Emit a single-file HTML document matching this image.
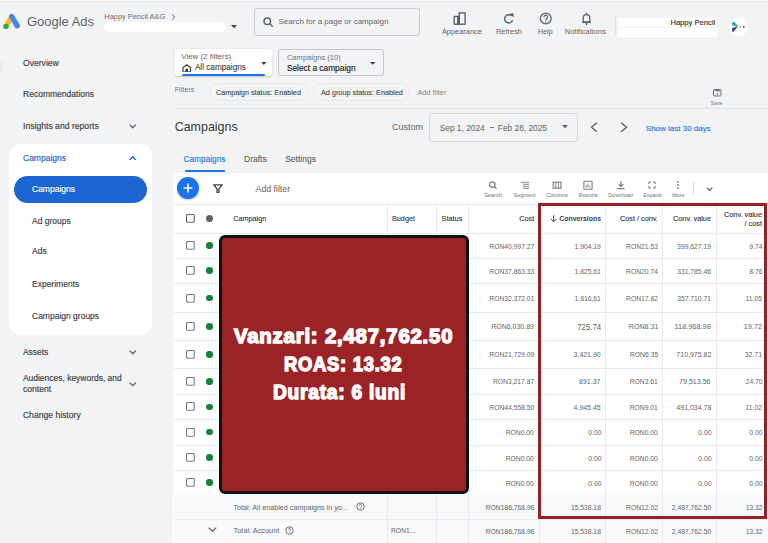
<!DOCTYPE html>
<html><head><meta charset="utf-8"><style>
html,body{margin:0;padding:0;}
body{width:768px;height:543px;overflow:hidden;position:relative;background:#f1f3f4;font-family:"Liberation Sans",sans-serif;}
.t{position:absolute;white-space:nowrap;}
.b{position:absolute;}
.ov{position:absolute;white-space:nowrap;color:#fff;font-weight:700;transform-origin:0 0;}

</style></head><body>
<div class="b" style="left:0.00px;top:0.00px;width:768.00px;height:1.20px;background:#fbfcfd"></div>
<div class="b" style="left:0.00px;top:1.20px;width:768.00px;height:1.00px;background:#e9ebee"></div>
<div class="b" style="left:0.00px;top:60.00px;width:3.00px;height:13.00px;background:#ebedef"></div>
<svg class="b" style="left:2.00px;top:12.00px" width="20" height="19" viewBox="0 0 20 19"><line x1="4.1" y1="14.3" x2="9.4" y2="5.0" stroke="#fbbc04" stroke-width="4.8" stroke-linecap="round"/><line x1="9.7" y1="4.6" x2="15.2" y2="13.8" stroke="#4285f4" stroke-width="5.3" stroke-linecap="round"/><circle cx="4.0" cy="14.4" r="2.7" fill="#34a853"/></svg>
<div class="t" style="left:27.00px;top:15.63px;font-size:12.96px;line-height:12.96px;color:#5f6368;font-weight:400;">Google Ads</div>
<div class="t" style="left:104.30px;top:13.02px;font-size:7.42px;line-height:7.42px;color:#6c7075;font-weight:400;">Happy Pencil A&amp;G</div>
<svg class="b" style="left:170.50px;top:13.80px" width="5" height="6" viewBox="0 0 5 6"><path d="M1.1 0.5 L3.7 3 L1.1 5.5" fill="none" stroke="#5f6368" stroke-width="1"/></svg>
<div class="b" style="left:104.00px;top:21.90px;width:122.00px;height:10.40px;background:#fff;border-radius:5px"></div>
<svg class="b" style="left:230.50px;top:25.00px" width="6" height="3.5" viewBox="0 0 6 3.5"><path d="M0 0 L6 0 L3 3.2 Z" fill="#3c4043"/></svg>
<div class="b" style="left:254.30px;top:8.30px;width:165.40px;height:27.30px;border:1px solid #c8cbcf;border-radius:3px;box-sizing:border-box"></div>
<svg class="b" style="left:262.50px;top:16.50px" width="11" height="11" viewBox="0 0 11 11"><circle cx="4.3" cy="4.3" r="3.3" fill="none" stroke="#5f6368" stroke-width="1.5"/><line x1="6.7" y1="6.7" x2="9.8" y2="9.8" stroke="#5f6368" stroke-width="1.6"/></svg>
<div class="t" style="left:278.50px;top:18.22px;font-size:8.01px;line-height:8.01px;color:#63676c;font-weight:400;">Search for a page or campaign</div>
<svg class="b" style="left:452.50px;top:12.00px" width="13" height="13" viewBox="0 0 13 13"><rect x="6.2" y="0.9" width="5.9" height="11.3" fill="none" stroke="#5f6368" stroke-width="1.4"/><rect x="1.2" y="4.5" width="5" height="7.7" fill="none" stroke="#5f6368" stroke-width="1.4"/><rect x="4" y="4.5" width="2.6" height="7.7" fill="#5f6368"/></svg>
<div class="t" style="left:261.90px;width:400px;text-align:center;top:28.32px;font-size:7.42px;line-height:7.42px;color:#5f6368;font-weight:400;">Appearance</div>
<svg class="b" style="left:502.50px;top:12.50px" width="12" height="12" viewBox="0 0 12 12"><path d="M9.6 7.2 A4.1 4.1 0 1 1 8.6 2.9" fill="none" stroke="#5f6368" stroke-width="1.4"/><path d="M6.6 0.6 L10.6 0.6 L10.6 4.6 Z" fill="#5f6368"/></svg>
<div class="t" style="left:309.00px;width:400px;text-align:center;top:28.31px;font-size:7.43px;line-height:7.43px;color:#5f6368;font-weight:400;">Refresh</div>
<svg class="b" style="left:539.00px;top:12.00px" width="13.5" height="13.5" viewBox="0 0 13.5 13.5"><circle cx="6.75" cy="6.5" r="5.4" fill="none" stroke="#5f6368" stroke-width="1.3"/><path d="M4.9 5.2 A1.9 1.9 0 1 1 7.6 6.7 C6.9 7.1 6.75 7.5 6.75 8.3" fill="none" stroke="#5f6368" stroke-width="1.2"/><circle cx="6.75" cy="10" r="0.75" fill="#5f6368"/></svg>
<div class="t" style="left:345.20px;width:400px;text-align:center;top:28.43px;font-size:7.29px;line-height:7.29px;color:#5f6368;font-weight:400;">Help</div>
<svg class="b" style="left:581.00px;top:12.00px" width="11" height="13.5" viewBox="0 0 11 13.5"><path d="M2.2 10 L2.2 6 A3.3 3.3 0 0 1 8.8 6 L8.8 10 Z" fill="none" stroke="#5f6368" stroke-width="1.3" stroke-linejoin="round"/><line x1="1" y1="10.4" x2="10" y2="10.4" stroke="#5f6368" stroke-width="1.3"/><line x1="5.5" y1="0.6" x2="5.5" y2="2.6" stroke="#5f6368" stroke-width="1.3"/><circle cx="5.5" cy="12.1" r="1" fill="#5f6368"/></svg>
<div class="t" style="left:385.20px;width:400px;text-align:center;top:28.22px;font-size:7.53px;line-height:7.53px;color:#5f6368;font-weight:400;">Notifications</div>
<div class="b" style="left:614.80px;top:16.00px;width:0.80px;height:20.00px;background:#e3e5e8"></div>
<div class="b" style="left:618.40px;top:17.90px;width:98.00px;height:9.20px;background:#fff"></div>
<div class="b" style="left:618.40px;top:28.30px;width:99.00px;height:8.40px;background:#fff"></div>
<div class="t" style="right:52.70px;text-align:right;top:18.63px;font-size:7.64px;line-height:7.64px;color:#303336;font-weight:400;background:#fff;-webkit-text-stroke:0.15px #303336">Happy Pencil</div>
<div class="b" style="left:728.80px;top:17.90px;width:18.80px;height:18.40px;background:#fff;border-radius:50%"></div>
<svg class="b" style="left:731.00px;top:20.00px" width="16" height="14" viewBox="0 0 16 14"><path d="M1.1 1.8 L3.4 2.1 L7 5.9 L6.2 6.9 L1.1 5.0 Z" fill="#2aa5c0"/><path d="M1.1 7.9 L6.6 6.7 L2.6 11.8 L1.3 11.8 Z" fill="#2b3f82"/><circle cx="9.4" cy="6.9" r="0.7" fill="#4a5866"/><rect x="12" y="5.9" width="1.6" height="1.8" fill="#4a5866"/></svg>
<div class="t" style="left:23.00px;top:58.52px;font-size:8.60px;line-height:8.60px;color:#3c4043;font-weight:400;-webkit-text-stroke:0.15px #3c4043">Overview</div>
<div class="t" style="left:23.00px;top:90.29px;font-size:8.52px;line-height:8.52px;color:#3c4043;font-weight:400;-webkit-text-stroke:0.15px #3c4043">Recommendations</div>
<div class="t" style="left:23.00px;top:121.68px;font-size:8.65px;line-height:8.65px;color:#3c4043;font-weight:400;-webkit-text-stroke:0.15px #3c4043">Insights and reports</div>
<svg class="b" style="left:129.20px;top:124.30px" width="7.5" height="4.5" viewBox="0 0 7.5 4.5"><path d="M0.7 0.6 L3.75 3.8 L6.8 0.6" fill="none" stroke="#5f6368" stroke-width="1.3"/></svg>
<div class="b" style="left:9.20px;top:144.00px;width:142.40px;height:190.50px;background:#fff;border-radius:12px"></div>
<div class="t" style="left:23.00px;top:153.80px;font-size:8.50px;line-height:8.50px;color:#1a62d2;font-weight:400;-webkit-text-stroke:0.15px #1a62d2">Campaigns</div>
<svg class="b" style="left:129.00px;top:155.60px" width="7.5" height="4.5" viewBox="0 0 7.5 4.5"><path d="M0.7 3.9 L3.75 0.7 L6.8 3.9" fill="none" stroke="#1a62d2" stroke-width="1.3"/></svg>
<div class="b" style="left:13.80px;top:175.80px;width:133.50px;height:27.30px;background:#1b66d2;border-radius:14px"></div>
<div class="t" style="left:32.00px;top:185.30px;font-size:8.50px;line-height:8.50px;color:#fff;font-weight:400;-webkit-text-stroke:0.15px #fff">Campaigns</div>
<div class="t" style="left:32.00px;top:216.80px;font-size:8.50px;line-height:8.50px;color:#3c4043;font-weight:400;-webkit-text-stroke:0.15px #3c4043">Ad groups</div>
<div class="t" style="left:32.00px;top:247.40px;font-size:8.50px;line-height:8.50px;color:#3c4043;font-weight:400;-webkit-text-stroke:0.15px #3c4043">Ads</div>
<div class="t" style="left:32.00px;top:279.50px;font-size:8.50px;line-height:8.50px;color:#3c4043;font-weight:400;-webkit-text-stroke:0.15px #3c4043">Experiments</div>
<div class="t" style="left:32.00px;top:311.80px;font-size:8.50px;line-height:8.50px;color:#3c4043;font-weight:400;-webkit-text-stroke:0.15px #3c4043">Campaign groups</div>
<div class="t" style="left:22.90px;top:347.84px;font-size:8.46px;line-height:8.46px;color:#3c4043;font-weight:400;-webkit-text-stroke:0.15px #3c4043">Assets</div>
<svg class="b" style="left:129.20px;top:350.20px" width="7.5" height="4.5" viewBox="0 0 7.5 4.5"><path d="M0.7 0.6 L3.75 3.8 L6.8 0.6" fill="none" stroke="#5f6368" stroke-width="1.3"/></svg>
<div class="t" style="left:22.90px;top:373.82px;font-size:8.48px;line-height:8.48px;color:#3c4043;font-weight:400;-webkit-text-stroke:0.15px #3c4043">Audiences, keywords, and</div>
<div class="t" style="left:22.90px;top:384.82px;font-size:8.60px;line-height:8.60px;color:#3c4043;font-weight:400;-webkit-text-stroke:0.15px #3c4043">content</div>
<svg class="b" style="left:129.20px;top:381.80px" width="7.5" height="4.5" viewBox="0 0 7.5 4.5"><path d="M0.7 0.6 L3.75 3.8 L6.8 0.6" fill="none" stroke="#5f6368" stroke-width="1.3"/></svg>
<div class="t" style="left:22.90px;top:410.62px;font-size:8.60px;line-height:8.60px;color:#3c4043;font-weight:400;-webkit-text-stroke:0.15px #3c4043">Change history</div>
<div class="b" style="left:174.60px;top:49.00px;width:97.40px;height:27.00px;background:#fff;box-shadow:0 0.5px 1.5px rgba(0,0,0,0.18);border-radius:2px"></div>
<div class="b" style="left:182.00px;top:74.00px;width:83.00px;height:2.20px;background:#1a73e8;border-radius:1px"></div>
<div class="t" style="left:181.30px;top:53.29px;font-size:7.92px;line-height:7.92px;color:#5f6368;font-weight:400;">View (2 filters)</div>
<svg class="b" style="left:182.30px;top:63.60px" width="9.5" height="8.5" viewBox="0 0 9.5 8.5"><path d="M1 8 L1 3.6 L4.75 0.8 L8.5 3.6 L8.5 8 Z" fill="none" stroke="#3c4043" stroke-width="1.2" stroke-linejoin="round"/><rect x="3.4" y="4.8" width="2.7" height="3.2" fill="#3c4043"/></svg>
<div class="t" style="left:194.90px;top:63.96px;font-size:8.20px;line-height:8.20px;color:#3c4043;font-weight:400;-webkit-text-stroke:0.1px #3c4043">All campaigns</div>
<svg class="b" style="left:261.00px;top:61.90px" width="5.6" height="3.2" viewBox="0 0 6 3.5"><path d="M0 0 L6 0 L3 3.2 Z" fill="#3c4043"/></svg>
<div class="b" style="left:277.50px;top:49.00px;width:106.30px;height:27.00px;border:1px solid #c5c8cc;border-radius:3px;box-sizing:border-box"></div>
<div class="t" style="left:286.90px;top:53.97px;font-size:7.59px;line-height:7.59px;color:#70757a;font-weight:400;">Campaigns (10)</div>
<div class="t" style="left:286.90px;top:63.73px;font-size:8.35px;line-height:8.35px;color:#202124;font-weight:400;-webkit-text-stroke:0.15px #202124">Select a campaign</div>
<svg class="b" style="left:369.80px;top:61.80px" width="5.2" height="3" viewBox="0 0 5.2 3"><path d="M0 0 L5.2 0 L2.6 2.8 Z" fill="#3c4043"/></svg>
<div class="t" style="left:174.70px;top:85.80px;font-size:7.20px;line-height:7.20px;color:#70757a;font-weight:400;">Filters</div>
<div class="b" style="left:208.60px;top:83.00px;width:100.00px;height:17.80px;border:1px solid #e6e8eb;border-radius:9px;box-sizing:border-box"></div>
<div class="t" style="left:215.90px;top:89.06px;font-size:7.25px;line-height:7.25px;color:#484c50;font-weight:400;-webkit-text-stroke:0.12px #484c50">Campaign status: Enabled</div>
<div class="b" style="left:313.20px;top:83.00px;width:97.30px;height:17.80px;border:1px solid #e6e8eb;border-radius:9px;box-sizing:border-box"></div>
<div class="t" style="left:320.90px;top:89.02px;font-size:7.30px;line-height:7.30px;color:#484c50;font-weight:400;-webkit-text-stroke:0.12px #484c50">Ad group status: Enabled</div>
<div class="t" style="left:417.40px;top:88.78px;font-size:7.35px;line-height:7.35px;color:#80868b;font-weight:400;">Add filter</div>
<svg class="b" style="left:712.60px;top:89.00px" width="9" height="7.5" viewBox="0 0 9 7.5"><rect x="0.55" y="0.55" width="7.4" height="6.4" rx="0.5" fill="none" stroke="#6f7378" stroke-width="1.0"/><rect x="2.2" y="0.6" width="4.6" height="1.7" fill="#6f7378"/><circle cx="4.5" cy="4.7" r="0.8" fill="#6f7378"/></svg>
<div class="t" style="left:516.60px;width:400px;text-align:center;top:100.92px;font-size:5.05px;line-height:5.05px;color:#70757a;font-weight:400;">Save</div>
<div class="b" style="left:174.00px;top:107.60px;width:594.00px;height:1.00px;background:#e2e4e7"></div>
<div class="t" style="left:174.70px;top:120.65px;font-size:12.46px;line-height:12.46px;color:#35383b;font-weight:400;">Campaigns</div>
<div class="t" style="left:391.90px;top:123.38px;font-size:9.00px;line-height:9.00px;color:#5f6368;font-weight:400;">Custom</div>
<div class="b" style="left:428.50px;top:112.70px;width:149.20px;height:29.60px;border:1px solid #d6d9dc;border-radius:3px;box-sizing:border-box"></div>
<div class="t" style="left:439.70px;top:124.33px;font-size:8.35px;line-height:8.35px;color:#5f6368;font-weight:400;">Sep 1, 2024</div>
<div class="b" style="left:490.20px;top:127.20px;width:3.60px;height:0.80px;background:#6f7378"></div>
<div class="t" style="left:497.80px;top:124.33px;font-size:8.35px;line-height:8.35px;color:#5f6368;font-weight:400;">Feb 28, 2025</div>
<svg class="b" style="left:562.30px;top:125.00px" width="6" height="3.6" viewBox="0 0 6 3.6"><path d="M0 0 L6 0 L3 3.3 Z" fill="#5f6368"/></svg>
<svg class="b" style="left:589.50px;top:122.00px" width="8" height="10.5" viewBox="0 0 8 10.5"><path d="M6.8 0.7 L1.5 5.25 L6.8 9.8" fill="none" stroke="#5f6368" stroke-width="1.4"/></svg>
<svg class="b" style="left:619.60px;top:122.00px" width="8" height="10.5" viewBox="0 0 8 10.5"><path d="M1.2 0.7 L6.5 5.25 L1.2 9.8" fill="none" stroke="#5f6368" stroke-width="1.4"/></svg>
<div class="t" style="left:645.80px;top:124.92px;font-size:8.01px;line-height:8.01px;color:#1a73e8;font-weight:400;-webkit-text-stroke:0.12px #1a73e8">Show last 30 days</div>
<div class="t" style="left:183.50px;top:154.67px;font-size:8.30px;line-height:8.30px;color:#1a73e8;font-weight:400;-webkit-text-stroke:0.12px #1a73e8">Campaigns</div>
<div class="b" style="left:184.60px;top:170.00px;width:40.00px;height:2.00px;background:#1a73e8;border-radius:1px 1px 0 0"></div>
<div class="t" style="left:244.00px;top:154.50px;font-size:8.50px;line-height:8.50px;color:#5f6368;font-weight:400;-webkit-text-stroke:0.12px #5f6368">Drafts</div>
<div class="t" style="left:285.20px;top:154.50px;font-size:8.50px;line-height:8.50px;color:#5f6368;font-weight:400;-webkit-text-stroke:0.12px #5f6368">Settings</div>
<div class="b" style="left:173.30px;top:172.50px;width:594.70px;height:371.00px;background:#fff"></div>
<div class="b" style="left:176.50px;top:176.50px;width:22.50px;height:22.50px;background:#1a73e8;border-radius:50%;box-shadow:0 1px 2px rgba(0,0,0,0.25)"></div>
<svg class="b" style="left:181.75px;top:181.75px" width="12" height="12" viewBox="0 0 12 12"><path d="M6 1.6 V10.4 M1.6 6 H10.4" stroke="#fff" stroke-width="1.6"/></svg>
<svg class="b" style="left:212.50px;top:183.50px" width="10" height="9.5" viewBox="0 0 10 9.5"><path d="M0.8 0.8 H9.2 L5.9 4.8 V8.8 L4.1 8.8 V4.8 Z" fill="none" stroke="#3c4043" stroke-width="1.3" stroke-linejoin="round"/></svg>
<div class="t" style="left:255.60px;top:185.10px;font-size:8.74px;line-height:8.74px;color:#5f6368;font-weight:400;">Add filter</div>
<svg class="b" style="left:487.00px;top:180.00px" width="12" height="10" viewBox="0 0 12 10"><circle cx="5.3" cy="4.6" r="2.7" fill="none" stroke="#74787d" stroke-width="1.2"/><line x1="7.2" y1="6.5" x2="9.6" y2="8.9" stroke="#74787d" stroke-width="1.3"/></svg>
<div class="t" style="left:293.00px;width:400px;text-align:center;top:192.86px;font-size:5.60px;line-height:5.60px;color:#6f7378;font-weight:400;">Search</div>
<svg class="b" style="left:518.60px;top:180.00px" width="12" height="10" viewBox="0 0 12 10"><path d="M1.8 2.3 H10.2 M4 4.3 H10.2 M4 6.3 H10.2 M4 8.3 H10.2" stroke="#74787d" stroke-width="0.9"/></svg>
<div class="t" style="left:324.60px;width:400px;text-align:center;top:192.94px;font-size:5.50px;line-height:5.50px;color:#6f7378;font-weight:400;">Segment</div>
<svg class="b" style="left:551.00px;top:180.00px" width="12" height="10" viewBox="0 0 12 10"><rect x="2.2" y="2.2" width="7.8" height="6" fill="none" stroke="#74787d" stroke-width="1.1"/><path d="M4.8 2.2 V8.2 M7.4 2.2 V8.2" stroke="#74787d" stroke-width="0.9"/></svg>
<div class="t" style="left:357.00px;width:400px;text-align:center;top:192.94px;font-size:5.50px;line-height:5.50px;color:#6f7378;font-weight:400;">Columns</div>
<svg class="b" style="left:582.20px;top:180.00px" width="12" height="10" viewBox="0 0 12 10"><rect x="1.9" y="1.2" width="8.2" height="8" rx="0.8" fill="none" stroke="#74787d" stroke-width="1.1"/><path d="M4.2 7.5 V5 M6 7.5 V3.5 M7.8 7.5 V6" stroke="#74787d" stroke-width="0.9"/></svg>
<div class="t" style="left:388.20px;width:400px;text-align:center;top:192.94px;font-size:5.50px;line-height:5.50px;color:#6f7378;font-weight:400;">Reports</div>
<svg class="b" style="left:614.60px;top:180.00px" width="12" height="10" viewBox="0 0 12 10"><path d="M6 1 V6.3 M3.6 4.2 L6 6.5 L8.4 4.2 M2.4 8.6 H9.6" fill="none" stroke="#74787d" stroke-width="1.1"/></svg>
<div class="t" style="left:420.60px;width:400px;text-align:center;top:192.94px;font-size:5.50px;line-height:5.50px;color:#6f7378;font-weight:400;">Download</div>
<svg class="b" style="left:646.30px;top:180.00px" width="12" height="10" viewBox="0 0 12 10"><path d="M3 4 V2 H5 M7 2 H9 V4 M9 6 V8 H7 M5 8 H3 V6" fill="none" stroke="#74787d" stroke-width="1.1"/></svg>
<div class="t" style="left:452.30px;width:400px;text-align:center;top:193.03px;font-size:5.40px;line-height:5.40px;color:#6f7378;font-weight:400;">Expand</div>
<svg class="b" style="left:672.40px;top:180.00px" width="12" height="10" viewBox="0 0 12 10"><circle cx="6" cy="1.8" r="0.9" fill="#74787d"/><circle cx="6" cy="5" r="0.9" fill="#74787d"/><circle cx="6" cy="8.2" r="0.9" fill="#74787d"/></svg>
<div class="t" style="left:478.40px;width:400px;text-align:center;top:192.94px;font-size:5.50px;line-height:5.50px;color:#6f7378;font-weight:400;">More</div>
<div class="b" style="left:693.40px;top:181.80px;width:0.80px;height:13.20px;background:#dadce0"></div>
<svg class="b" style="left:705.50px;top:186.80px" width="7" height="4" viewBox="0 0 7 4"><path d="M0.7 0.6 L3.5 3.3 L6.3 0.6" fill="none" stroke="#5f6368" stroke-width="1.2"/></svg>
<div class="b" style="left:174.00px;top:204.00px;width:594.00px;height:0.90px;background:#e8eaed"></div>
<div class="b" style="left:174.00px;top:232.55px;width:594.00px;height:0.90px;background:#e8eaed"></div>
<div class="b" style="left:174.00px;top:257.75px;width:594.00px;height:0.90px;background:#e8eaed"></div>
<div class="b" style="left:174.00px;top:282.75px;width:594.00px;height:0.90px;background:#e8eaed"></div>
<div class="b" style="left:174.00px;top:312.15px;width:594.00px;height:0.90px;background:#e8eaed"></div>
<div class="b" style="left:174.00px;top:339.85px;width:594.00px;height:0.90px;background:#e8eaed"></div>
<div class="b" style="left:174.00px;top:367.95px;width:594.00px;height:0.90px;background:#e8eaed"></div>
<div class="b" style="left:174.00px;top:394.05px;width:594.00px;height:0.90px;background:#e8eaed"></div>
<div class="b" style="left:174.00px;top:418.75px;width:594.00px;height:0.90px;background:#e8eaed"></div>
<div class="b" style="left:174.00px;top:444.55px;width:594.00px;height:0.90px;background:#e8eaed"></div>
<div class="b" style="left:174.00px;top:469.85px;width:594.00px;height:0.90px;background:#e8eaed"></div>
<div class="b" style="left:174.00px;top:494.55px;width:594.00px;height:0.90px;background:#e8eaed"></div>
<div class="b" style="left:174.00px;top:519.15px;width:594.00px;height:0.90px;background:#e8eaed"></div>
<div class="b" style="left:174.00px;top:495.40px;width:594.00px;height:24.00px;background:#f8f9fa"></div>
<div class="b" style="left:174.00px;top:520.00px;width:594.00px;height:23.00px;background:#f8f9fa"></div>
<div class="b" style="left:387.05px;top:204.00px;width:0.90px;height:339.00px;background:#e8eaed"></div>
<div class="b" style="left:436.15px;top:204.00px;width:0.90px;height:339.00px;background:#e8eaed"></div>
<div class="b" style="left:467.95px;top:204.00px;width:0.90px;height:339.00px;background:#e8eaed"></div>
<div class="b" style="left:539.05px;top:204.00px;width:0.90px;height:339.00px;background:#e8eaed"></div>
<div class="b" style="left:605.15px;top:204.00px;width:0.90px;height:339.00px;background:#e8eaed"></div>
<div class="b" style="left:662.15px;top:204.00px;width:0.90px;height:339.00px;background:#e8eaed"></div>
<div class="b" style="left:715.75px;top:204.00px;width:0.90px;height:339.00px;background:#e8eaed"></div>
<svg class="b" style="left:185.80px;top:214.30px" width="9" height="9" viewBox="0 0 9 9"><rect x="0.55" y="0.55" width="7.7" height="7.7" rx="0.8" fill="none" stroke="#5f6368" stroke-width="1.1"/></svg>
<div class="b" style="left:206.00px;top:215.00px;width:7.00px;height:7.00px;background:#5f6368;border-radius:50%"></div>
<div class="t" style="left:233.30px;top:215.37px;font-size:7.24px;line-height:7.24px;color:#3c4043;font-weight:400;-webkit-text-stroke:0.15px #3c4043">Campaign</div>
<div class="t" style="left:392.00px;top:215.15px;font-size:7.26px;line-height:7.26px;color:#3c4043;font-weight:400;-webkit-text-stroke:0.15px #3c4043">Budget</div>
<div class="t" style="left:441.60px;top:215.12px;font-size:7.30px;line-height:7.30px;color:#3c4043;font-weight:400;-webkit-text-stroke:0.15px #3c4043">Status</div>
<div class="t" style="right:233.80px;text-align:right;top:214.92px;font-size:7.30px;line-height:7.30px;color:#3c4043;font-weight:400;-webkit-text-stroke:0.15px #3c4043">Cost</div>
<svg class="b" style="left:549.80px;top:215.00px" width="7.4" height="7.5" viewBox="0 0 7.4 7.5"><path d="M3.7 0.3 V6.8 M0.8 3.9 L3.7 6.8 L6.6 3.9" fill="none" stroke="#3c4043" stroke-width="1"/></svg>
<div class="t" style="right:167.00px;text-align:right;top:216.16px;font-size:6.90px;line-height:6.90px;color:#3c4043;font-weight:700;">Conversions</div>
<div class="t" style="right:110.00px;text-align:right;top:214.92px;font-size:7.30px;line-height:7.30px;color:#3c4043;font-weight:400;-webkit-text-stroke:0.15px #3c4043">Cost / conv.</div>
<div class="t" style="right:57.00px;text-align:right;top:214.92px;font-size:7.30px;line-height:7.30px;color:#3c4043;font-weight:400;-webkit-text-stroke:0.15px #3c4043">Conv. value</div>
<div class="t" style="right:6.00px;text-align:right;top:210.82px;font-size:7.30px;line-height:7.30px;color:#3c4043;font-weight:400;-webkit-text-stroke:0.15px #3c4043">Conv. value</div>
<div class="t" style="right:6.00px;text-align:right;top:220.02px;font-size:7.30px;line-height:7.30px;color:#3c4043;font-weight:400;-webkit-text-stroke:0.15px #3c4043">/ cost</div>
<div class="t" style="right:234.00px;text-align:right;top:242.63px;font-size:7.40px;line-height:7.40px;color:#5f6368;font-weight:400;transform:scaleX(0.912);transform-origin:100% 0;">RON40,997.27</div>
<div class="t" style="right:167.00px;text-align:right;top:242.63px;font-size:7.40px;line-height:7.40px;color:#5f6368;font-weight:400;transform:scaleX(0.912);transform-origin:100% 0;">1,904.19</div>
<div class="t" style="right:110.00px;text-align:right;top:242.63px;font-size:7.40px;line-height:7.40px;color:#5f6368;font-weight:400;transform:scaleX(0.912);transform-origin:100% 0;">RON21.53</div>
<div class="t" style="right:57.00px;text-align:right;top:242.63px;font-size:7.40px;line-height:7.40px;color:#5f6368;font-weight:400;transform:scaleX(0.912);transform-origin:100% 0;">399,627.19</div>
<div class="t" style="right:6.00px;text-align:right;top:242.63px;font-size:7.40px;line-height:7.40px;color:#5f6368;font-weight:400;transform:scaleX(0.912);transform-origin:100% 0;">9.74</div>
<svg class="b" style="left:185.80px;top:241.20px" width="9" height="9" viewBox="0 0 9 9"><rect x="0.55" y="0.55" width="7.7" height="7.7" rx="0.8" fill="none" stroke="#777b80" stroke-width="1.1"/></svg>
<div class="b" style="left:206.30px;top:242.30px;width:6.60px;height:6.60px;background:#188038;border-radius:50%"></div>
<div class="t" style="right:234.00px;text-align:right;top:267.73px;font-size:7.40px;line-height:7.40px;color:#5f6368;font-weight:400;transform:scaleX(0.912);transform-origin:100% 0;">RON37,863.33</div>
<div class="t" style="right:167.00px;text-align:right;top:267.73px;font-size:7.40px;line-height:7.40px;color:#5f6368;font-weight:400;transform:scaleX(0.912);transform-origin:100% 0;">1,825.61</div>
<div class="t" style="right:110.00px;text-align:right;top:267.73px;font-size:7.40px;line-height:7.40px;color:#5f6368;font-weight:400;transform:scaleX(0.912);transform-origin:100% 0;">RON20.74</div>
<div class="t" style="right:57.00px;text-align:right;top:267.73px;font-size:7.40px;line-height:7.40px;color:#5f6368;font-weight:400;transform:scaleX(0.912);transform-origin:100% 0;">331,785.46</div>
<div class="t" style="right:6.00px;text-align:right;top:267.73px;font-size:7.40px;line-height:7.40px;color:#5f6368;font-weight:400;transform:scaleX(0.912);transform-origin:100% 0;">8.76</div>
<svg class="b" style="left:185.80px;top:266.30px" width="9" height="9" viewBox="0 0 9 9"><rect x="0.55" y="0.55" width="7.7" height="7.7" rx="0.8" fill="none" stroke="#777b80" stroke-width="1.1"/></svg>
<div class="b" style="left:206.30px;top:267.40px;width:6.60px;height:6.60px;background:#188038;border-radius:50%"></div>
<div class="t" style="right:234.00px;text-align:right;top:294.93px;font-size:7.40px;line-height:7.40px;color:#5f6368;font-weight:400;transform:scaleX(0.912);transform-origin:100% 0;">RON32,372.01</div>
<div class="t" style="right:167.00px;text-align:right;top:294.93px;font-size:7.40px;line-height:7.40px;color:#5f6368;font-weight:400;transform:scaleX(0.912);transform-origin:100% 0;">1,816,61</div>
<div class="t" style="right:110.00px;text-align:right;top:294.93px;font-size:7.40px;line-height:7.40px;color:#5f6368;font-weight:400;transform:scaleX(0.912);transform-origin:100% 0;">RON17.82</div>
<div class="t" style="right:57.00px;text-align:right;top:294.93px;font-size:7.40px;line-height:7.40px;color:#5f6368;font-weight:400;transform:scaleX(0.912);transform-origin:100% 0;">357,710.71</div>
<div class="t" style="right:6.00px;text-align:right;top:294.93px;font-size:7.40px;line-height:7.40px;color:#5f6368;font-weight:400;transform:scaleX(0.912);transform-origin:100% 0;">11.05</div>
<svg class="b" style="left:185.80px;top:293.50px" width="9" height="9" viewBox="0 0 9 9"><rect x="0.55" y="0.55" width="7.7" height="7.7" rx="0.8" fill="none" stroke="#777b80" stroke-width="1.1"/></svg>
<div class="b" style="left:206.30px;top:294.60px;width:6.60px;height:6.60px;background:#188038;border-radius:50%"></div>
<div class="t" style="right:234.00px;text-align:right;top:323.23px;font-size:7.70px;line-height:7.70px;color:#5f6368;font-weight:400;transform:scaleX(0.912);transform-origin:100% 0;">RON6,030.89</div>
<div class="t" style="right:167.00px;text-align:right;top:322.54px;font-size:8.51px;line-height:8.51px;color:#5f6368;font-weight:400;transform:scaleX(0.912);transform-origin:100% 0;">725.74</div>
<div class="t" style="right:110.00px;text-align:right;top:323.17px;font-size:7.77px;line-height:7.77px;color:#5f6368;font-weight:400;transform:scaleX(0.912);transform-origin:100% 0;">RON8.31</div>
<div class="t" style="right:57.00px;text-align:right;top:322.92px;font-size:8.07px;line-height:8.07px;color:#5f6368;font-weight:400;transform:scaleX(0.912);transform-origin:100% 0;">118,968.98</div>
<div class="t" style="right:6.00px;text-align:right;top:322.98px;font-size:7.99px;line-height:7.99px;color:#5f6368;font-weight:400;transform:scaleX(0.912);transform-origin:100% 0;">19.72</div>
<svg class="b" style="left:185.80px;top:322.05px" width="9" height="9" viewBox="0 0 9 9"><rect x="0.55" y="0.55" width="7.7" height="7.7" rx="0.8" fill="none" stroke="#777b80" stroke-width="1.1"/></svg>
<div class="b" style="left:206.30px;top:323.15px;width:6.60px;height:6.60px;background:#188038;border-radius:50%"></div>
<div class="t" style="right:234.00px;text-align:right;top:351.38px;font-size:7.40px;line-height:7.40px;color:#5f6368;font-weight:400;transform:scaleX(0.912);transform-origin:100% 0;">RON21,729.09</div>
<div class="t" style="right:167.00px;text-align:right;top:351.21px;font-size:7.61px;line-height:7.61px;color:#5f6368;font-weight:400;transform:scaleX(0.912);transform-origin:100% 0;">3,421.90</div>
<div class="t" style="right:110.00px;text-align:right;top:351.30px;font-size:7.50px;line-height:7.50px;color:#5f6368;font-weight:400;transform:scaleX(0.912);transform-origin:100% 0;">RON6.35</div>
<div class="t" style="right:57.00px;text-align:right;top:351.16px;font-size:7.67px;line-height:7.67px;color:#5f6368;font-weight:400;transform:scaleX(0.912);transform-origin:100% 0;">710,975.82</div>
<div class="t" style="right:6.00px;text-align:right;top:351.20px;font-size:7.62px;line-height:7.62px;color:#5f6368;font-weight:400;transform:scaleX(0.912);transform-origin:100% 0;">32.71</div>
<svg class="b" style="left:185.80px;top:349.95px" width="9" height="9" viewBox="0 0 9 9"><rect x="0.55" y="0.55" width="7.7" height="7.7" rx="0.8" fill="none" stroke="#777b80" stroke-width="1.1"/></svg>
<div class="b" style="left:206.30px;top:351.05px;width:6.60px;height:6.60px;background:#188038;border-radius:50%"></div>
<div class="t" style="right:234.00px;text-align:right;top:378.48px;font-size:7.40px;line-height:7.40px;color:#5f6368;font-weight:400;transform:scaleX(0.912);transform-origin:100% 0;">RON3,217.87</div>
<div class="t" style="right:167.00px;text-align:right;top:378.23px;font-size:7.70px;line-height:7.70px;color:#5f6368;font-weight:400;transform:scaleX(0.912);transform-origin:100% 0;">891.37</div>
<div class="t" style="right:110.00px;text-align:right;top:378.48px;font-size:7.40px;line-height:7.40px;color:#5f6368;font-weight:400;transform:scaleX(0.912);transform-origin:100% 0;">RON3.61</div>
<div class="t" style="right:57.00px;text-align:right;top:378.17px;font-size:7.77px;line-height:7.77px;color:#5f6368;font-weight:400;transform:scaleX(0.912);transform-origin:100% 0;">79,513.56</div>
<div class="t" style="right:6.00px;text-align:right;top:378.48px;font-size:7.40px;line-height:7.40px;color:#5f6368;font-weight:400;transform:scaleX(0.912);transform-origin:100% 0;">24.70</div>
<svg class="b" style="left:185.80px;top:377.05px" width="9" height="9" viewBox="0 0 9 9"><rect x="0.55" y="0.55" width="7.7" height="7.7" rx="0.8" fill="none" stroke="#777b80" stroke-width="1.1"/></svg>
<div class="b" style="left:206.30px;top:378.15px;width:6.60px;height:6.60px;background:#188038;border-radius:50%"></div>
<div class="t" style="right:234.00px;text-align:right;top:403.88px;font-size:7.40px;line-height:7.40px;color:#5f6368;font-weight:400;transform:scaleX(0.912);transform-origin:100% 0;">RON44,558.50</div>
<div class="t" style="right:167.00px;text-align:right;top:403.71px;font-size:7.61px;line-height:7.61px;color:#5f6368;font-weight:400;transform:scaleX(0.912);transform-origin:100% 0;">4,945.45</div>
<div class="t" style="right:110.00px;text-align:right;top:403.88px;font-size:7.40px;line-height:7.40px;color:#5f6368;font-weight:400;transform:scaleX(0.912);transform-origin:100% 0;">RON9.01</div>
<div class="t" style="right:57.00px;text-align:right;top:403.66px;font-size:7.67px;line-height:7.67px;color:#5f6368;font-weight:400;transform:scaleX(0.912);transform-origin:100% 0;">491,034.78</div>
<div class="t" style="right:6.00px;text-align:right;top:403.88px;font-size:7.40px;line-height:7.40px;color:#5f6368;font-weight:400;transform:scaleX(0.912);transform-origin:100% 0;">11.02</div>
<svg class="b" style="left:185.80px;top:402.45px" width="9" height="9" viewBox="0 0 9 9"><rect x="0.55" y="0.55" width="7.7" height="7.7" rx="0.8" fill="none" stroke="#777b80" stroke-width="1.1"/></svg>
<div class="b" style="left:206.30px;top:403.55px;width:6.60px;height:6.60px;background:#188038;border-radius:50%"></div>
<div class="t" style="right:234.00px;text-align:right;top:429.13px;font-size:7.40px;line-height:7.40px;color:#5f6368;font-weight:400;transform:scaleX(0.912);transform-origin:100% 0;">RON0.00</div>
<div class="t" style="right:167.00px;text-align:right;top:429.13px;font-size:7.40px;line-height:7.40px;color:#5f6368;font-weight:400;transform:scaleX(0.912);transform-origin:100% 0;">0.00</div>
<div class="t" style="right:110.00px;text-align:right;top:429.13px;font-size:7.40px;line-height:7.40px;color:#5f6368;font-weight:400;transform:scaleX(0.912);transform-origin:100% 0;">RON0.00</div>
<div class="t" style="right:57.00px;text-align:right;top:429.13px;font-size:7.40px;line-height:7.40px;color:#5f6368;font-weight:400;transform:scaleX(0.912);transform-origin:100% 0;">0.00</div>
<div class="t" style="right:6.00px;text-align:right;top:429.13px;font-size:7.40px;line-height:7.40px;color:#5f6368;font-weight:400;transform:scaleX(0.912);transform-origin:100% 0;">0.00</div>
<svg class="b" style="left:185.80px;top:427.70px" width="9" height="9" viewBox="0 0 9 9"><rect x="0.55" y="0.55" width="7.7" height="7.7" rx="0.8" fill="none" stroke="#777b80" stroke-width="1.1"/></svg>
<div class="b" style="left:206.30px;top:428.80px;width:6.60px;height:6.60px;background:#188038;border-radius:50%"></div>
<div class="t" style="right:234.00px;text-align:right;top:454.68px;font-size:7.40px;line-height:7.40px;color:#5f6368;font-weight:400;transform:scaleX(0.912);transform-origin:100% 0;">RON0.00</div>
<div class="t" style="right:167.00px;text-align:right;top:454.68px;font-size:7.40px;line-height:7.40px;color:#5f6368;font-weight:400;transform:scaleX(0.912);transform-origin:100% 0;">0.00</div>
<div class="t" style="right:110.00px;text-align:right;top:454.68px;font-size:7.40px;line-height:7.40px;color:#5f6368;font-weight:400;transform:scaleX(0.912);transform-origin:100% 0;">RON0.00</div>
<div class="t" style="right:57.00px;text-align:right;top:454.68px;font-size:7.40px;line-height:7.40px;color:#5f6368;font-weight:400;transform:scaleX(0.912);transform-origin:100% 0;">0.00</div>
<div class="t" style="right:6.00px;text-align:right;top:454.68px;font-size:7.40px;line-height:7.40px;color:#5f6368;font-weight:400;transform:scaleX(0.912);transform-origin:100% 0;">0.00</div>
<svg class="b" style="left:185.80px;top:453.25px" width="9" height="9" viewBox="0 0 9 9"><rect x="0.55" y="0.55" width="7.7" height="7.7" rx="0.8" fill="none" stroke="#777b80" stroke-width="1.1"/></svg>
<div class="b" style="left:206.30px;top:454.35px;width:6.60px;height:6.60px;background:#188038;border-radius:50%"></div>
<div class="t" style="right:234.00px;text-align:right;top:479.68px;font-size:7.40px;line-height:7.40px;color:#5f6368;font-weight:400;transform:scaleX(0.912);transform-origin:100% 0;">RON0.00</div>
<div class="t" style="right:167.00px;text-align:right;top:479.68px;font-size:7.40px;line-height:7.40px;color:#5f6368;font-weight:400;transform:scaleX(0.912);transform-origin:100% 0;">0.00</div>
<div class="t" style="right:110.00px;text-align:right;top:479.68px;font-size:7.40px;line-height:7.40px;color:#5f6368;font-weight:400;transform:scaleX(0.912);transform-origin:100% 0;">RON0.00</div>
<div class="t" style="right:57.00px;text-align:right;top:479.68px;font-size:7.40px;line-height:7.40px;color:#5f6368;font-weight:400;transform:scaleX(0.912);transform-origin:100% 0;">0.00</div>
<div class="t" style="right:6.00px;text-align:right;top:479.68px;font-size:7.40px;line-height:7.40px;color:#5f6368;font-weight:400;transform:scaleX(0.912);transform-origin:100% 0;">0.00</div>
<svg class="b" style="left:185.80px;top:478.25px" width="9" height="9" viewBox="0 0 9 9"><rect x="0.55" y="0.55" width="7.7" height="7.7" rx="0.8" fill="none" stroke="#777b80" stroke-width="1.1"/></svg>
<div class="b" style="left:206.30px;top:479.35px;width:6.60px;height:6.60px;background:#188038;border-radius:50%"></div>
<div class="t" style="right:234.00px;text-align:right;top:504.33px;font-size:7.40px;line-height:7.40px;color:#5f6368;font-weight:400;transform:scaleX(0.912);transform-origin:100% 0;">RON186,768.96</div>
<div class="t" style="right:167.00px;text-align:right;top:504.33px;font-size:7.40px;line-height:7.40px;color:#5f6368;font-weight:400;transform:scaleX(0.912);transform-origin:100% 0;">15,538.18</div>
<div class="t" style="right:110.00px;text-align:right;top:504.33px;font-size:7.40px;line-height:7.40px;color:#5f6368;font-weight:400;transform:scaleX(0.912);transform-origin:100% 0;">RON12.02</div>
<div class="t" style="right:57.00px;text-align:right;top:504.33px;font-size:7.40px;line-height:7.40px;color:#5f6368;font-weight:400;transform:scaleX(0.912);transform-origin:100% 0;">2,487,762.50</div>
<div class="t" style="right:6.00px;text-align:right;top:504.33px;font-size:7.40px;line-height:7.40px;color:#5f6368;font-weight:400;transform:scaleX(0.912);transform-origin:100% 0;">13.32</div>
<div class="t" style="right:234.00px;text-align:right;top:527.53px;font-size:7.40px;line-height:7.40px;color:#5f6368;font-weight:400;transform:scaleX(0.912);transform-origin:100% 0;">RON186,768.96</div>
<div class="t" style="right:167.00px;text-align:right;top:527.53px;font-size:7.40px;line-height:7.40px;color:#5f6368;font-weight:400;transform:scaleX(0.912);transform-origin:100% 0;">15,538.18</div>
<div class="t" style="right:110.00px;text-align:right;top:527.53px;font-size:7.40px;line-height:7.40px;color:#5f6368;font-weight:400;transform:scaleX(0.912);transform-origin:100% 0;">RON12.02</div>
<div class="t" style="right:57.00px;text-align:right;top:527.53px;font-size:7.40px;line-height:7.40px;color:#5f6368;font-weight:400;transform:scaleX(0.912);transform-origin:100% 0;">2,487,762.50</div>
<div class="t" style="right:6.00px;text-align:right;top:527.53px;font-size:7.40px;line-height:7.40px;color:#5f6368;font-weight:400;transform:scaleX(0.912);transform-origin:100% 0;">13.32</div>
<div class="t" style="left:233.50px;top:503.90px;font-size:7.20px;line-height:7.20px;color:#5f6368;font-weight:400;">Total: All enabled campaigns in yo...</div>
<svg class="b" style="left:355.50px;top:502.30px" width="9" height="9" viewBox="0 0 9 9"><circle cx="4.5" cy="4.5" r="3.7" fill="none" stroke="#5f6368" stroke-width="0.9"/><path d="M3.3 3.7 A1.2 1.2 0 1 1 5 4.7 C4.6 4.9 4.5 5.1 4.5 5.6" fill="none" stroke="#5f6368" stroke-width="0.8"/><circle cx="4.5" cy="6.7" r="0.45" fill="#5f6368"/></svg>
<svg class="b" style="left:208.30px;top:526.80px" width="9" height="5" viewBox="0 0 9 5"><path d="M0.7 0.6 L4.5 4.3 L8.3 0.6" fill="none" stroke="#5f6368" stroke-width="1.3"/></svg>
<div class="t" style="left:233.60px;top:526.88px;font-size:7.35px;line-height:7.35px;color:#5f6368;font-weight:400;">Total: Account</div>
<svg class="b" style="left:285.00px;top:525.60px" width="9" height="9" viewBox="0 0 9 9"><circle cx="4.5" cy="4.5" r="3.7" fill="none" stroke="#5f6368" stroke-width="0.9"/><path d="M3.3 3.7 A1.2 1.2 0 1 1 5 4.7 C4.6 4.9 4.5 5.1 4.5 5.6" fill="none" stroke="#5f6368" stroke-width="0.8"/><circle cx="4.5" cy="6.7" r="0.45" fill="#5f6368"/></svg>
<div class="t" style="left:391.00px;top:527.03px;font-size:7.40px;line-height:7.40px;color:#5f6368;font-weight:400;transform:scaleX(0.912);transform-origin:0 0;">RON1...</div>
<div class="b" style="left:538.20px;top:203.40px;width:229.00px;height:316.00px;border:3.1px solid #932226;box-sizing:border-box"></div>
<div class="b" style="left:218.60px;top:234.70px;width:250.70px;height:259.00px;background:#9b2226;border:3px solid #111;border-radius:6px;box-sizing:border-box"></div>
<div class="ov" style="left:234.25px;top:326.38px;font-size:20.1px;line-height:20.1px;letter-spacing:0.8px;transform:scale(1.0117,1.000);-webkit-text-stroke:1.4px #fff">Vanzari: 2,487,762.50</div>
<div class="ov" style="left:284.25px;top:354.18px;font-size:20.1px;line-height:20.1px;letter-spacing:0.8px;transform:scale(0.9153,1.000);-webkit-text-stroke:1.4px #fff">ROAS: 13.32</div>
<div class="ov" style="left:273.30px;top:382.28px;font-size:20.1px;line-height:20.1px;letter-spacing:0.8px;transform:scale(0.9530,1.000);-webkit-text-stroke:1.4px #fff">Durata: 6 luni</div>
</body></html>
